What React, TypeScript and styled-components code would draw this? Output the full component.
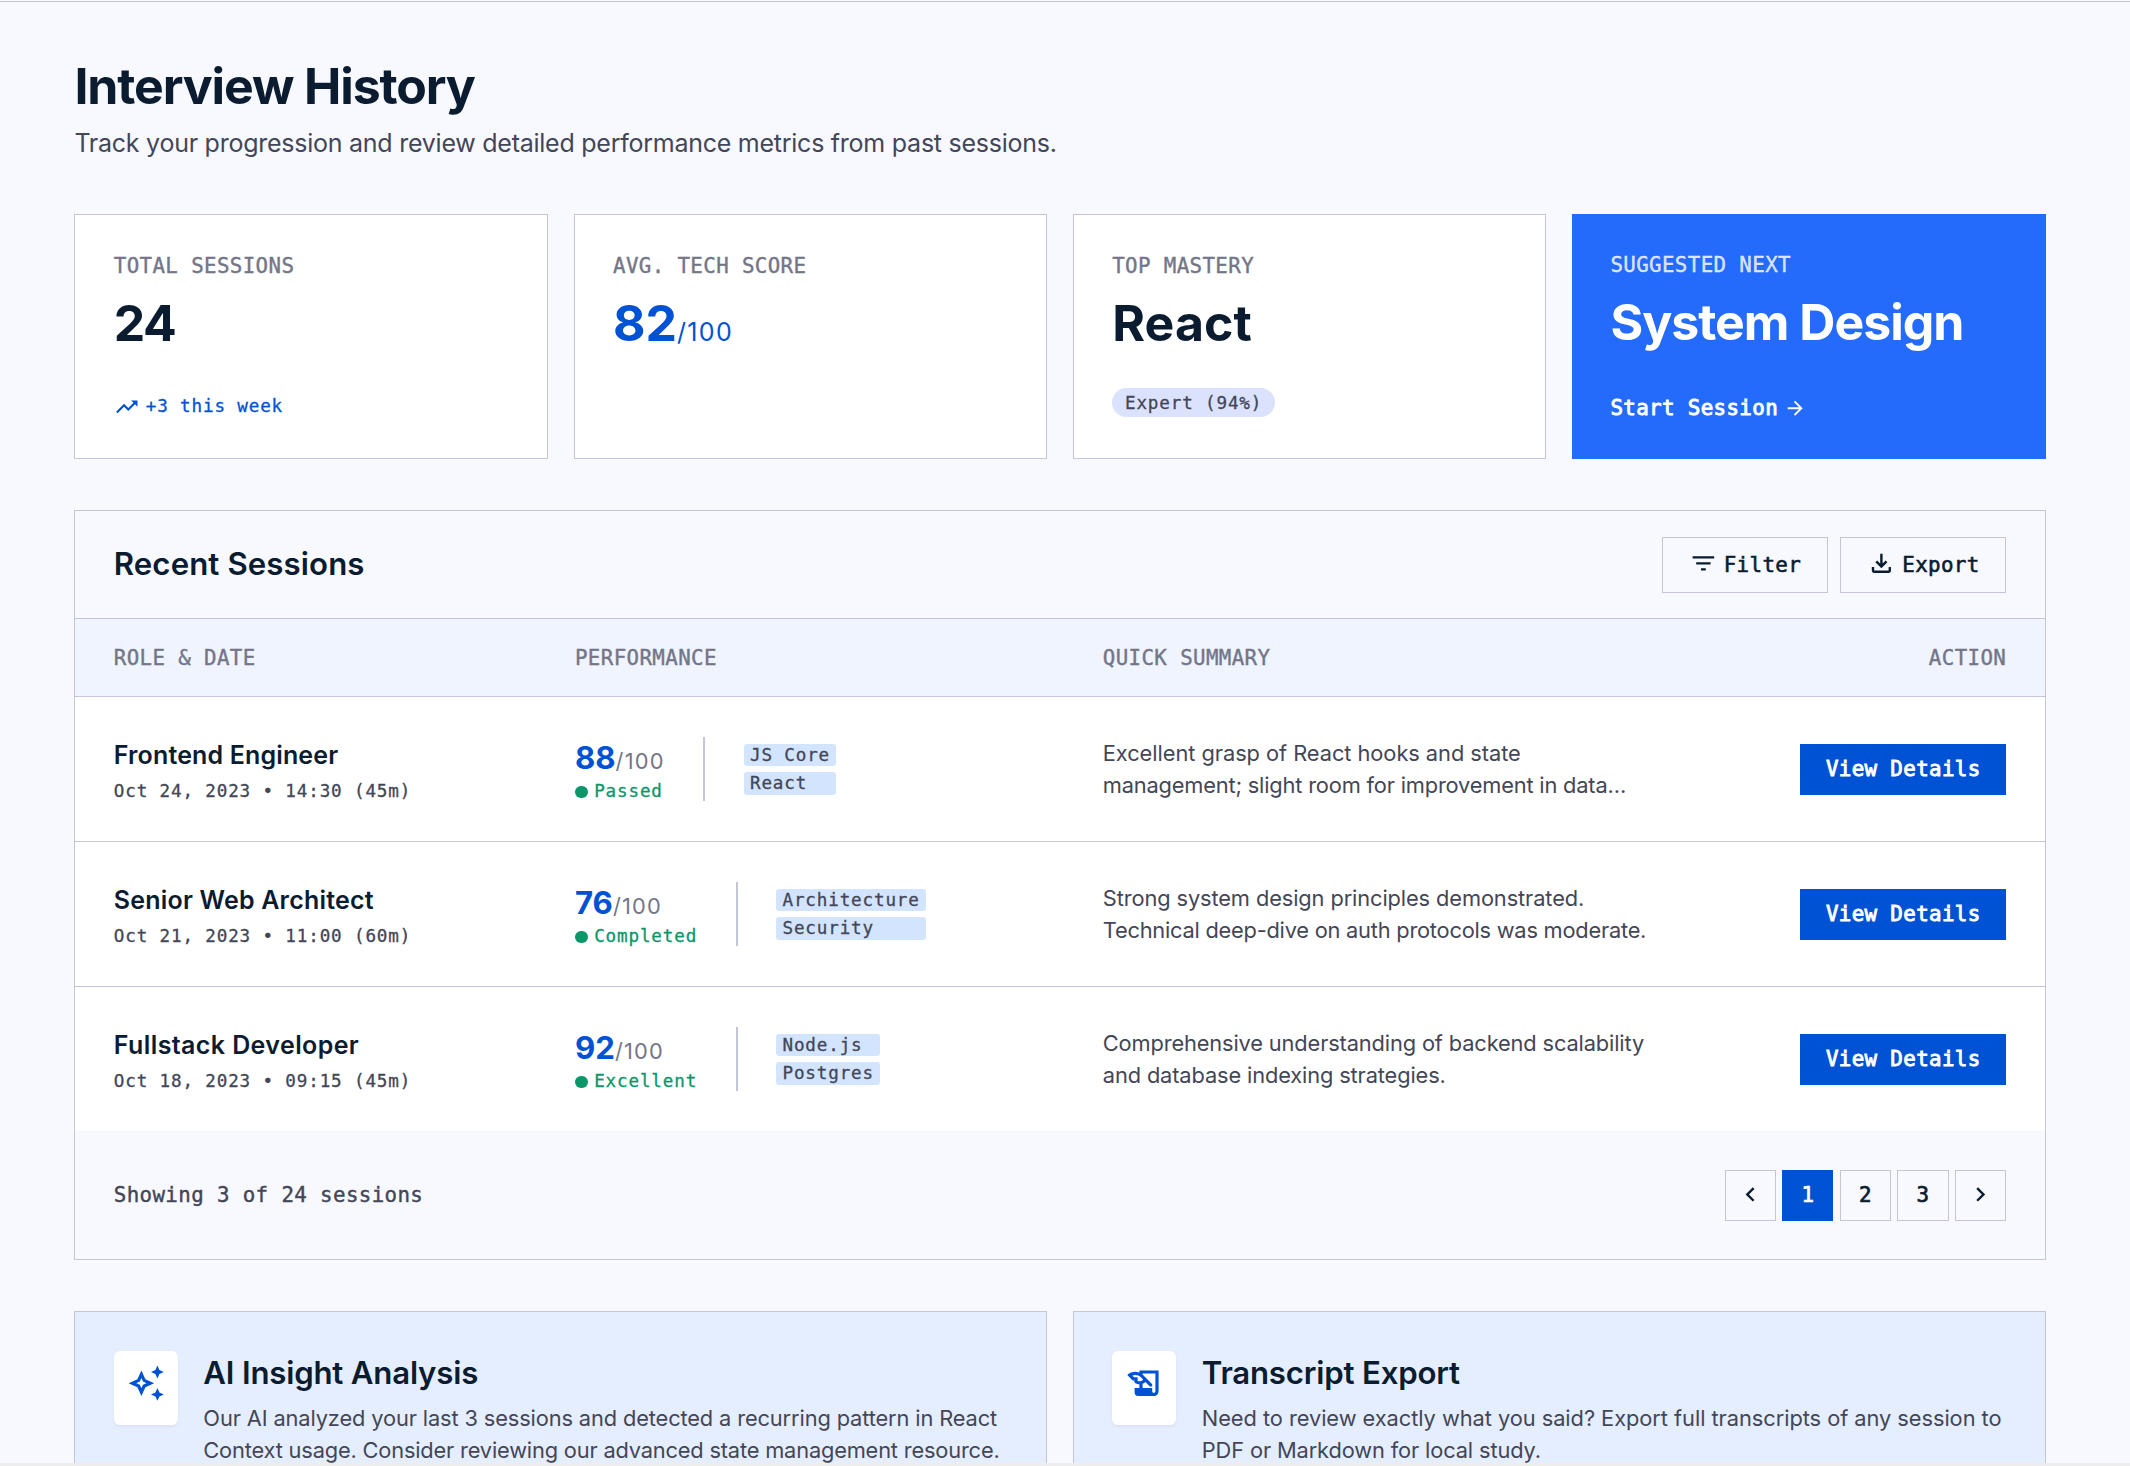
import React from 'react'
import styled, { createGlobalStyle } from 'styled-components';
import {
  MdArrowForward,
  MdChevronLeft,
  MdChevronRight,
  MdFilterList,
  MdOutlineAutoAwesome,
  MdOutlineFileDownload,
  MdOutlineHistoryEdu,
  MdTrendingUp,
} from 'react-icons/md';

const colors = {
  bg: '#f8f9ff',
  surface: '#ffffff',
  surfaceLow: '#eff4ff',
  surfaceMid: '#e5eeff',
  tag: '#d3e4fe',
  pill: '#dae2fd',
  border: '#c4c5d9',
  text: '#0b1c30',
  textSoft: '#434656',
  label: '#747688',
  primary: '#0052d4',
  primaryBright: '#256bfb',
  success: '#0a9669',
};

const sessions = [
  {
    role: 'Frontend Engineer',
    tracking: 0.15,
    date: 'Oct 24, 2023 • 14:30 (45m)',
    score: 88,
    status: 'Passed',
    tags: ['JS Core', 'React'],
    summary: [
      { text: 'Excellent grasp of React hooks and state', tracking: -0.04 },
      { text: 'management; slight room for improvement in data…', tracking: -0.17 },
    ],
  },
  {
    role: 'Senior Web Architect',
    tracking: 0.2,
    date: 'Oct 21, 2023 • 11:00 (60m)',
    score: 76,
    status: 'Completed',
    tags: ['Architecture', 'Security'],
    summary: [
      { text: 'Strong system design principles demonstrated.', tracking: -0.1 },
      { text: 'Technical deep-dive on auth protocols was moderate.', tracking: -0.22 },
    ],
  },
  {
    role: 'Fullstack Developer',
    tracking: 0.4,
    date: 'Oct 18, 2023 • 09:15 (45m)',
    score: 92,
    status: 'Excellent',
    tags: ['Node.js', 'Postgres'],
    summary: [
      { text: 'Comprehensive understanding of backend scalability', tracking: -0.13 },
      { text: 'and database indexing strategies.', tracking: -0.12 },
    ],
  },
];

const insights = [
  {
    title: 'AI Insight Analysis',
    icon: <MdOutlineAutoAwesome />,
    body: [
      { text: 'Our AI analyzed your last 3 sessions and detected a recurring pattern in React', tracking: -0.12 },
      { text: 'Context usage. Consider reviewing our advanced state management resource.', tracking: -0.17 },
    ],
  },
  {
    title: 'Transcript Export',
    icon: <MdOutlineHistoryEdu />,
    body: [
      { text: 'Need to review exactly what you said? Export full transcripts of any session to', tracking: -0.04 },
      { text: 'PDF or Markdown for local study.', tracking: -0.12 },
    ],
  },
];

const App = () => {
  return (
    <>
      <GlobalStyle />
      <PageStyled>
        <MainStyled>
          <Title>Interview History</Title>
          <Subtitle>Track your progression and review detailed performance metrics from past sessions.</Subtitle>

          <StatGrid>
            <StatCard>
              <StatLabel>Total Sessions</StatLabel>
              <StatValue $tracking={-1.4}>24</StatValue>
              <Trend>
                <MdTrendingUp />
                +3 this week
              </Trend>
            </StatCard>
            <StatCard>
              <StatLabel>Avg. Tech Score</StatLabel>
              <StatValue $primary $tracking={0}>82<small>/100</small></StatValue>
            </StatCard>
            <StatCard>
              <StatLabel>Top Mastery</StatLabel>
              <StatValue $tracking={0.1}>React</StatValue>
              <Pill>Expert (94%)</Pill>
            </StatCard>
            <StatCard $highlight>
              <StatLabel>Suggested Next</StatLabel>
              <StatValue $tracking={-1}>System Design</StatValue>
              <StartLink>
                Start Session
                <MdArrowForward />
              </StartLink>
            </StatCard>
          </StatGrid>

          <Panel>
            <PanelHeader>
              <h2>Recent Sessions</h2>
              <Toolbar>
                <ToolButton><MdFilterList />Filter</ToolButton>
                <ToolButton><MdOutlineFileDownload />Export</ToolButton>
              </Toolbar>
            </PanelHeader>

            <HeadRow>
              <span>Role &amp; Date</span>
              <span>Performance</span>
              <span>Quick Summary</span>
              <span>Action</span>
            </HeadRow>

            {sessions.map((item) => (
              <SessionRow key={item.role}>
                <RoleCell>
                  <RoleName $tracking={item.tracking}>{item.role}</RoleName>
                  <RoleDate>{item.date}</RoleDate>
                </RoleCell>
                <PerformanceCell>
                  <ScoreBlock>
                    <Score>{item.score}<small>/100</small></Score>
                    <Status>{item.status}</Status>
                  </ScoreBlock>
                  <Tags>
                    {item.tags.map((tag) => <Tag key={tag}>{tag}</Tag>)}
                  </Tags>
                </PerformanceCell>
                <div>
                  {item.summary.map((line) => (
                    <BodyLine key={line.text} $tracking={line.tracking}>{line.text}</BodyLine>
                  ))}
                </div>
                <DetailsButton>View Details</DetailsButton>
              </SessionRow>
            ))}

            <PanelFooter>
              <span>Showing 3 of 24 sessions</span>
              <Pagination>
                <PageButton><MdChevronLeft /></PageButton>
                <PageButton $active>1</PageButton>
                <PageButton>2</PageButton>
                <PageButton>3</PageButton>
                <PageButton><MdChevronRight /></PageButton>
              </Pagination>
            </PanelFooter>
          </Panel>

          <InsightGrid>
            {insights.map((item) => (
              <InsightCard key={item.title}>
                <InsightIcon>{item.icon}</InsightIcon>
                <div>
                  <InsightTitle>{item.title}</InsightTitle>
                  {item.body.map((line) => (
                    <BodyLine key={line.text} $tracking={line.tracking}>{line.text}</BodyLine>
                  ))}
                </div>
              </InsightCard>
            ))}
          </InsightGrid>
        </MainStyled>
        <BottomStrip />
      </PageStyled>
    </>
  )
}

const GlobalStyle = createGlobalStyle`
  * {
    box-sizing: border-box;
    margin: 0;
    padding: 0;
  }

  body {
    background: ${colors.bg};
    color: ${colors.text};
    font-family: "Inter", sans-serif;
    overflow: hidden;
  }

  button {
    border: none;
    color: inherit;
  }
`;

// 20.8px label text, used for headings, buttons and pagination
const monoLabel = `
  font-family: "DejaVu Sans Mono", monospace;
  font-size: 20.8px;
  line-height: 25.6px;
  letter-spacing: 0.374px;
  -webkit-text-stroke: 0.4px currentColor;
`;

// 17.6px caption text
const monoCaption = `
  font-family: "DejaVu Sans Mono", monospace;
  font-size: 17.6px;
  letter-spacing: 0.845px;
  -webkit-text-stroke: 0.3px currentColor;
`;

const PageStyled = styled.div`
  display: flex;
  flex-direction: column;
  height: 1466px;
  padding-top: 1px;
  overflow: hidden;
`;

const MainStyled = styled.main`
  flex: 1;
  min-height: 0;
  overflow: hidden;
  padding: 53.8px 84.4px 0 74.4px;
  border-top: 1px solid ${colors.border};
`;

const BottomStrip = styled.div`
  height: 3px;
  flex-shrink: 0;
  background: #ededed;
`;

const Title = styled.h1`
  font-size: 50px;
  font-weight: 700;
  line-height: 60px;
  letter-spacing: -1.13px;
`;

const Subtitle = styled.p`
  margin-top: 8px;
  font-size: 25px;
  line-height: 38.4px;
  letter-spacing: -0.25px;
  color: ${colors.textSoft};
`;

const StatGrid = styled.section`
  display: grid;
  grid-template-columns: repeat(4, 1fr);
  gap: 25.6px;
  height: 245px;
  margin-top: 51.9px;
`;

const StatLabel = styled.div`
  ${monoLabel}
  text-transform: uppercase;
  color: ${colors.label};
`;

const StatValue = styled.div<{ $primary?: boolean; $tracking: number }>`
  margin-top: 13.4px;
  font-size: 50px;
  font-weight: 700;
  line-height: 60px;
  letter-spacing: ${(props) => props.$tracking}px;
  color: ${(props) => props.$primary ? colors.primary : 'inherit'};

  small {
    font-size: 25px;
    font-weight: 400;
    letter-spacing: 1.3px;
  }
`;

const StatCard = styled.div<{ $highlight?: boolean }>`
  display: flex;
  flex-direction: column;
  align-items: flex-start;
  padding: 39.4px 38.4px 0;
  background: ${(props) => props.$highlight ? colors.primaryBright : colors.surface};
  border: ${(props) => props.$highlight ? 'none' : `1px solid ${colors.border}`};
  color: ${(props) => props.$highlight ? '#ffffff' : colors.text};

  ${StatLabel} {
    color: ${(props) => props.$highlight ? 'rgba(255, 255, 255, 0.8)' : colors.label};
  }
`;

const Trend = styled.div`
  ${monoCaption}
  display: flex;
  align-items: center;
  gap: 6.4px;
  margin-top: 40.4px;
  line-height: 25.6px;
  color: ${colors.primary};

  svg {
    width: 25.6px;
    height: 25.6px;
    stroke: none;
  }
`;

const Pill = styled.span`
  ${monoCaption}
  margin-top: 34.5px;
  padding: 3.7px 12.8px 2.7px;
  line-height: 22.4px;
  border-radius: 20px;
  background: ${colors.pill};
  color: ${colors.textSoft};
`;

const StartLink = styled.div`
  ${monoLabel}
  display: flex;
  align-items: center;
  gap: 6.4px;
  margin-top: 43.4px;
  -webkit-text-stroke: 0.9px currentColor;

  svg {
    width: 22.4px;
    height: 22.4px;
    stroke: none;
  }
`;

const Panel = styled.section`
  margin-top: 51.2px;
  border: 1px solid ${colors.border};
`;

const PanelHeader = styled.header`
  display: flex;
  align-items: center;
  justify-content: space-between;
  height: 108px;
  padding: 0 38.4px;
  border-bottom: 1px solid ${colors.border};

  h2 {
    padding-bottom: 2px;
    font-size: 31.2px;
    font-weight: 600;
    letter-spacing: 0.1px;
  }
`;

const Toolbar = styled.div`
  display: flex;
  gap: 12.8px;
`;

const ToolButton = styled.button`
  ${monoLabel}
  display: flex;
  align-items: center;
  gap: 6.4px;
  height: 56px;
  padding: 2px 25.6px 0;
  border: 1px solid ${colors.border};
  background: transparent;
  -webkit-text-stroke: 0.6px currentColor;

  svg {
    width: 28.8px;
    height: 28.8px;
    margin-bottom: 4px;
    stroke: none;
  }
`;

const tableGrid = `
  display: grid;
  grid-template-columns: 461.2px 527.8px 1fr auto;
  align-items: center;
  padding: 0 38.4px;
`;

const HeadRow = styled.div`
  ${tableGrid}
  ${monoLabel}
  height: 78px;
  padding-top: 2px;
  text-transform: uppercase;
  color: ${colors.label};
  background: ${colors.surfaceLow};
  border-bottom: 1px solid ${colors.border};
`;

const SessionRow = styled.div`
  ${tableGrid}
  height: 145px;
  background: ${colors.surface};
  border-bottom: 1px solid ${colors.border};

  &:nth-last-child(2) {
    height: 144px;
    border-bottom: none;
  }
`;

const RoleCell = styled.div`
  padding-top: 2px;
`;

const RoleName = styled.div<{ $tracking: number }>`
  font-size: 25px;
  font-weight: 600;
  line-height: 38.4px;
  letter-spacing: ${(props) => props.$tracking}px;
`;

const RoleDate = styled.div`
  ${monoCaption}
  margin-top: 4.7px;
  line-height: 25.6px;
  color: ${colors.textSoft};
`;

const PerformanceCell = styled.div`
  display: flex;
  align-items: center;
  gap: 38.6px;
`;

const ScoreBlock = styled.div`
  padding-top: 6px;
`;

const Score = styled.div`
  font-size: 31.2px;
  font-weight: 700;
  line-height: 36.4px;
  color: ${colors.primary};

  small {
    font-size: 21.8px;
    font-weight: 400;
    letter-spacing: 1.2px;
    color: ${colors.label};
  }
`;

const Status = styled.div`
  ${monoCaption}
  display: flex;
  align-items: center;
  gap: 6.4px;
  line-height: 25.6px;
  color: ${colors.success};

  &::before {
    content: "";
    width: 12.8px;
    height: 12.8px;
    border-radius: 50%;
    background: currentColor;
  }
`;

const Tags = styled.div`
  display: flex;
  flex-direction: column;
  justify-content: center;
  gap: 6.4px;
  height: 64px;
  padding-left: 38.4px;
  border-left: 2px solid ${colors.border};
`;

const Tag = styled.span`
  ${monoCaption}
  padding: 0 6.4px;
  line-height: 22.4px;
  border-radius: 3.2px;
  background: ${colors.tag};
  color: ${colors.textSoft};
`;

const BodyLine = styled.p<{ $tracking: number }>`
  font-size: 21.8px;
  line-height: 32px;
  letter-spacing: ${(props) => props.$tracking}px;
  white-space: nowrap;
  color: ${colors.textSoft};
`;

const DetailsButton = styled.button`
  ${monoLabel}
  height: 51.2px;
  padding: 1px 25.6px 0;
  background: ${colors.primary};
  color: #ffffff;
  -webkit-text-stroke: 0.9px currentColor;
`;

const PanelFooter = styled.footer`
  ${monoLabel}
  display: flex;
  align-items: center;
  justify-content: space-between;
  height: 128px;
  padding: 0 38.4px;
  color: ${colors.textSoft};

  > span {
    padding-top: 2px;
  }
`;

const Pagination = styled.div`
  display: flex;
  gap: 6.4px;
`;

const PageButton = styled.button<{ $active?: boolean }>`
  ${monoLabel}
  display: flex;
  align-items: center;
  justify-content: center;
  width: 51.2px;
  height: 51.2px;
  padding-top: 1px;
  border: 1px solid ${(props) => props.$active ? colors.primary : colors.border};
  background: ${(props) => props.$active ? colors.primary : 'transparent'};
  color: ${(props) => props.$active ? '#ffffff' : colors.text};
  -webkit-text-stroke: 0.7px currentColor;

  svg {
    width: 28.8px;
    height: 28.8px;
    margin-bottom: 3px;
  }
`;

const InsightGrid = styled.section`
  display: grid;
  grid-template-columns: repeat(2, 1fr);
  gap: 25.6px;
  margin-top: 51.2px;
`;

const InsightCard = styled.div`
  display: flex;
  align-items: flex-start;
  gap: 25.6px;
  height: 205px;
  padding: 38.4px;
  border: 1px solid ${colors.border};
  background: ${colors.surfaceMid};
`;

const InsightIcon = styled.div`
  flex-shrink: 0;
  height: 74.4px;
  padding: 12.8px;
  border-radius: 6.4px;
  background: ${colors.surface};
  box-shadow: 0 1.6px 3.2px rgba(0, 0, 0, 0.05);
  color: ${colors.primary};

  svg {
    display: block;
    width: 38.4px;
    height: 38.4px;
  }
`;

const InsightTitle = styled.h3`
  margin-bottom: 6.4px;
  font-size: 31.2px;
  font-weight: 600;
  line-height: 44.8px;
  letter-spacing: -0.2px;
`;

export default App
